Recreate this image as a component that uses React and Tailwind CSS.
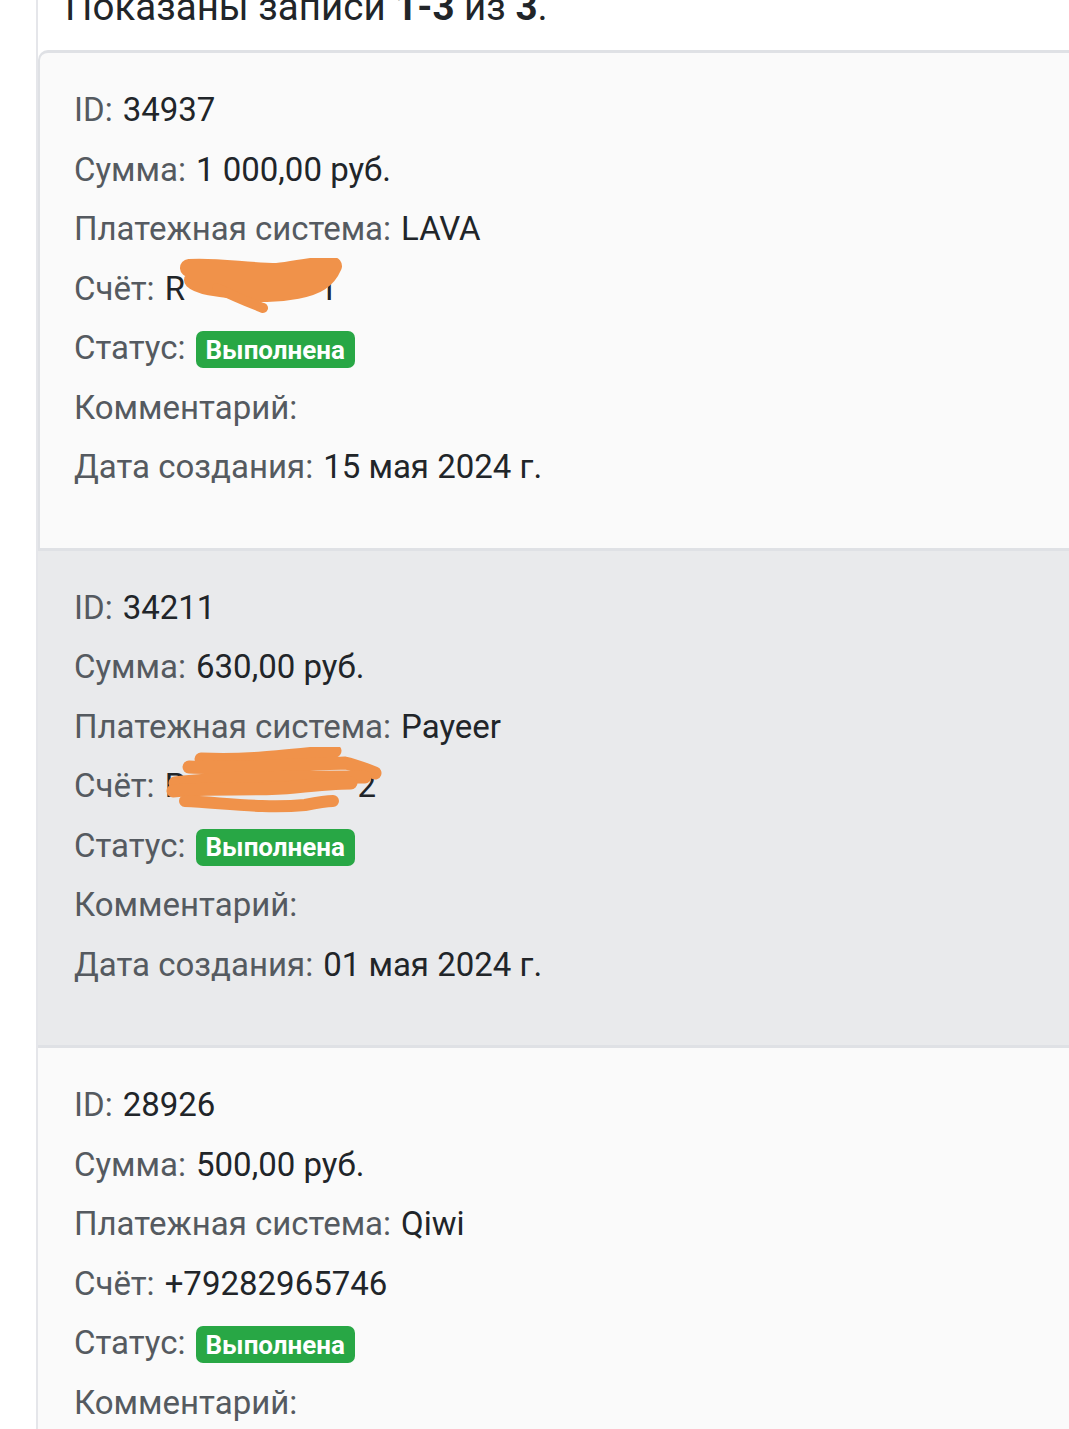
import React from "react";

const rows = [
  {
    id: "34937",
    sum: "1 000,00 руб.",
    ps: "LAVA",
    acct: "R",
    acctEnd: "1",
    date: "15 мая 2024 г.",
    bg: "bg-[#fafafa]",
    scribble: 1,
  },
  {
    id: "34211",
    sum: "630,00 руб.",
    ps: "Payeer",
    acct: "P",
    acctEnd: "2",
    date: "01 мая 2024 г.",
    bg: "bg-[#e9eaec]",
    scribble: 2,
  },
  {
    id: "28926",
    sum: "500,00 руб.",
    ps: "Qiwi",
    acct: "+79282965746",
    date: "",
    bg: "bg-[#fafafa]",
    scribble: 0,
  },
];

function Scribble1() {
  return (
    <svg className="absolute left-[12px] top-[-6px]" width="170" height="60" viewBox="0 0 170 60">
      <path d="M12 10 C40 8 70 14 100 14 C120 12 140 6 156 8 C150 22 140 28 120 32 C100 36 80 36 60 32 C40 30 22 28 16 22 C30 18 60 22 90 24 C110 26 130 22 146 16" fill="none" stroke="#f0924a" strokeWidth="18" strokeLinecap="round" strokeLinejoin="round" />
      <path d="M40 30 C60 40 76 46 86 50" fill="none" stroke="#f0924a" strokeWidth="10" strokeLinecap="round" />
    </svg>
  );
}

function Scribble2() {
  return (
    <svg className="absolute left-[0px] top-[-14px]" width="220" height="72" viewBox="0 0 220 72">
      <path d="M36 12 C80 14 110 10 170 4" fill="none" stroke="#f0924a" strokeWidth="13" strokeLinecap="round" />
      <path d="M24 20 C70 22 120 18 180 16 C190 18 200 22 210 26" fill="none" stroke="#f0924a" strokeWidth="13" strokeLinecap="round" />
      <path d="M10 36 C60 30 120 30 200 30" fill="none" stroke="#f0924a" strokeWidth="13" strokeLinecap="round" />
      <path d="M8 44 C50 40 90 44 130 40 C150 38 170 36 186 36" fill="none" stroke="#f0924a" strokeWidth="13" strokeLinecap="round" />
      <path d="M20 54 C60 56 100 62 140 58 C150 56 160 54 168 54" fill="none" stroke="#f0924a" strokeWidth="12" strokeLinecap="round" />
    </svg>
  );
}

function Row({ label, children }) {
  return (
    <div className="h-[59.5px] flex items-center whitespace-nowrap">
      <span className="text-[#555a60]">{label}</span>
      <span className="ml-[10px] text-[#212529] flex items-center">{children}</span>
    </div>
  );
}

function Card({ r, first }) {
  return (
    <div
      className={`${r.bg} border-t-[3px] border-[#dfe1e5] pt-[27px] pb-[51px] ${first ? "rounded-tl-[10px] border-l-[2px] pl-[34px]" : "pl-[36px]"}`}
    >
      <Row label="ID:">{r.id}</Row>
      <Row label="Сумма:">{r.sum}</Row>
      <Row label="Платежная система:">{r.ps}</Row>
      <Row label="Счёт:">
        {r.scribble === 0 ? (
          r.acct
        ) : (
          <span className="relative inline-flex items-center">
            <span>{r.acct}</span>
            <span className={r.scribble === 1 ? "w-[134px]" : "w-[172px]"}></span>
            <span>{r.acctEnd}</span>
            {r.scribble === 1 ? <Scribble1 /> : <Scribble2 />}
          </span>
        )}
      </Row>
      <Row label="Статус:">
        <span className="inline-flex items-center justify-center h-[37px] px-[10px] mt-[4px] rounded-[7px] bg-[#28a745] text-white font-bold text-[26px] leading-none">
          Выполнена
        </span>
      </Row>
      <Row label="Комментарий:">{""}</Row>
      <Row label="Дата создания:">{r.date}</Row>
    </div>
  );
}

export default function App() {
  return (
    <div
      className="w-[1069px] h-[1429px] overflow-hidden bg-white"
      style={{ fontFamily: "Roboto, 'Noto Sans', sans-serif" }}
    >
      <div className="ml-[36px] w-[1100px] border-l-[2px] border-[#e5e6ea] text-[33px]">
        <div className="h-[50px] relative">
          <div className="absolute left-[27px] top-[-17px] text-[38.5px] leading-[48px] text-[#212529] whitespace-nowrap">
            Показаны записи <b>1-3</b> из <b>3</b>.
          </div>
        </div>
        {rows.map((r, i) => (
          <Card key={r.id} r={r} first={i === 0} />
        ))}
      </div>
    </div>
  );
}
